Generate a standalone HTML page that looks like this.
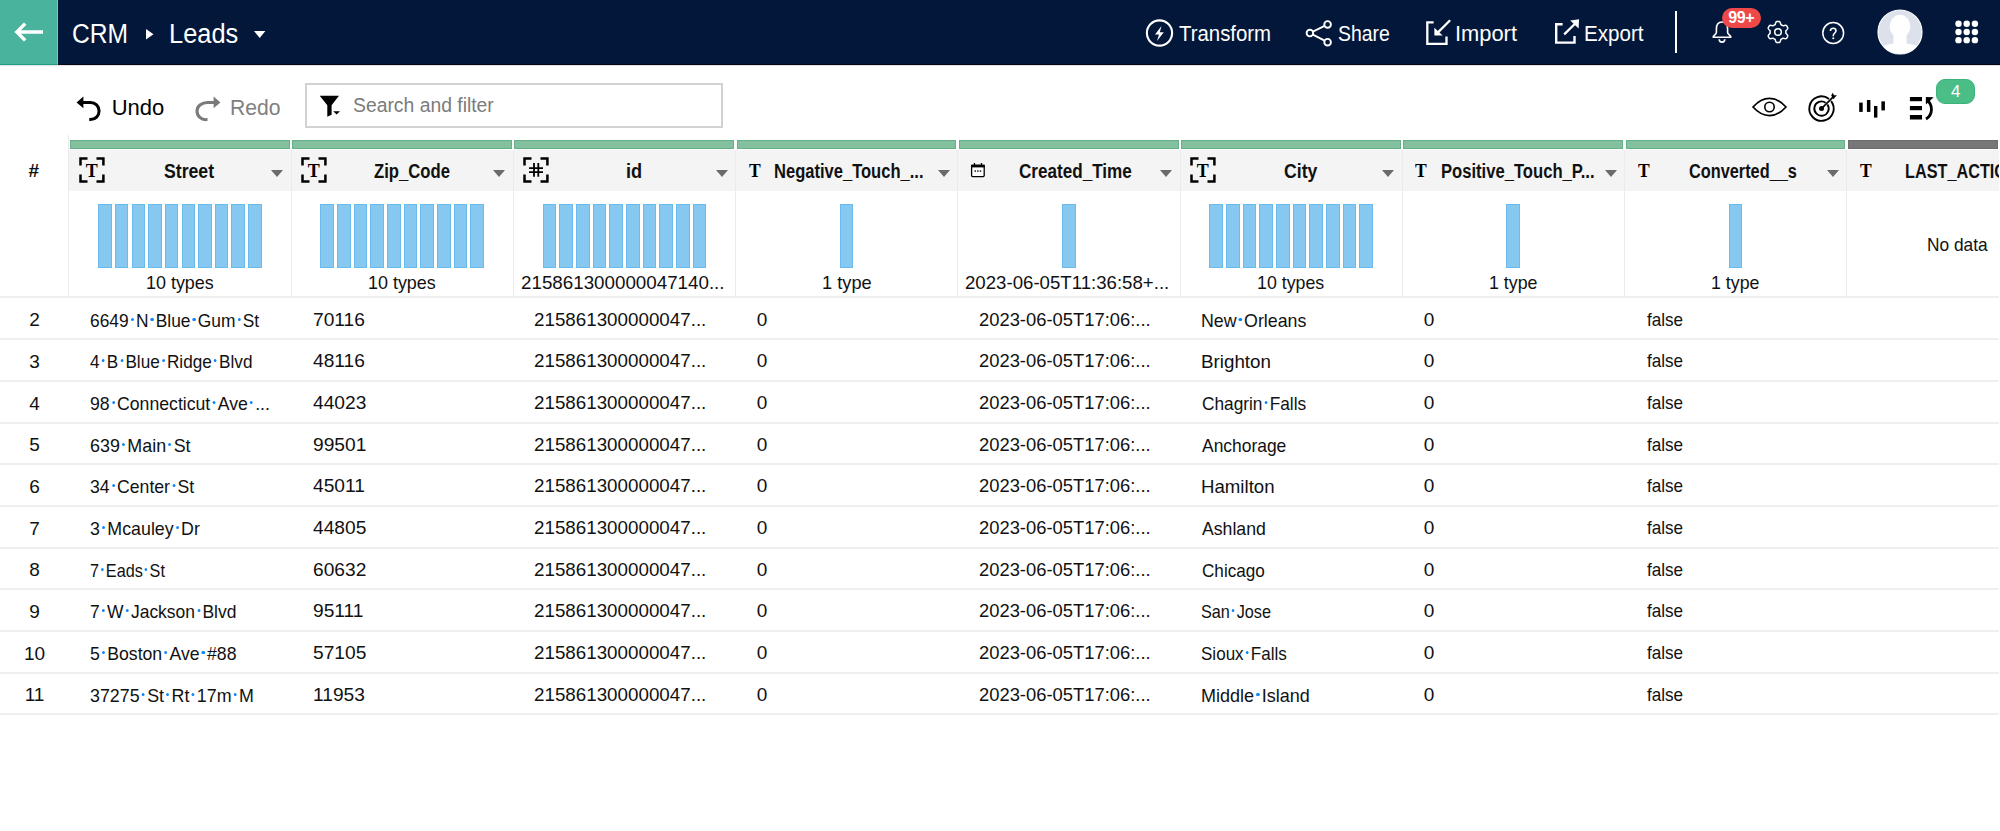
<!DOCTYPE html>
<html><head><meta charset="utf-8"><style>
*{box-sizing:border-box;margin:0;padding:0}
html,body{width:2000px;height:831px;overflow:hidden;background:#fff;font-family:"Liberation Sans",sans-serif;color:#000}
.a{position:absolute;transform-origin:0 0}
#nav{left:0;top:0;width:2000px;height:65px;background:#03173a;border-bottom:1px solid #02050d;box-shadow:0 1px 1px rgba(60,70,90,.15)}
#back{left:0;top:0;width:58px;height:65px;background:#4ab39d;border-right:1px solid #5fd6b5;border-bottom:1px solid #1f9c84}
.nt{color:#fff;font-size:27px;line-height:30px;white-space:nowrap}
.nb{color:#fff;font-size:21.5px;line-height:24px;white-space:nowrap}
.tb{font-size:22px;line-height:26px;white-space:nowrap}
.cb{top:140px;height:9.3px;background:#82c09e;border:1px solid #66b189}
.hd{top:149.5px;height:41px;background:#f4f4f4}
.vl{width:1px;background:#ebebeb}
.hl{height:2px;background:#efefef;left:0;width:2000px}
.hn{font-weight:bold;font-size:20px;line-height:22px;white-space:nowrap;color:#111}
.dd{width:0;height:0;border-left:6px solid transparent;border-right:6px solid transparent;border-top:7.5px solid #6b6b6b}
.bar{background:#86c8f0;border:1px solid #6abbec;top:203.8px;height:63.8px}
.pl{font-size:19px;line-height:22px;white-space:nowrap;top:270.5px;color:#111}
.c{font-size:19px;line-height:22px;white-space:nowrap;color:#111}
.d{display:inline-block;width:3.2px;height:3.2px;border-radius:50%;background:#0a84ff;margin:0 2.4px;vertical-align:6px}
.Ti{font-family:"Liberation Serif",serif;font-weight:bold;font-size:19.5px;line-height:20px;top:161px}
</style></head><body>

<div id="nav" class="a"></div><div id="back" class="a"></div>
<svg class="a" style="left:14px;top:21px" width="30" height="22" viewBox="0 0 30 22"><path d="M29 11H4M11.2 2.6L2.8 11L11.2 19.4" fill="none" stroke="#fff" stroke-width="3.4"/></svg>
<div id="crm" class="a nt" style="left:72.16px;top:18.70px;transform:scaleX(0.9119);">CRM</div>
<svg class="a" style="left:146px;top:28.5px" width="8" height="11"><path d="M0 0L7.5 5.3L0 10.6Z" fill="#fff"/></svg>
<div id="leads" class="a nt" style="left:169.36px;top:18.70px;transform:scaleX(0.9409);">Leads</div>
<svg class="a" style="left:254px;top:31px" width="12" height="8"><path d="M0 0H11.4L5.7 7Z" fill="#fff"/></svg>
<svg class="a" style="left:1144px;top:18px" width="31" height="31" viewBox="0 0 31 31"><circle cx="15.5" cy="15" r="12.6" fill="none" stroke="#fff" stroke-width="2.1"/><path d="M17.5 8L11 16.6H15L13 23L19.8 14.3H15.8Z" fill="#fff"/></svg>
<div id="transform" class="a nb" style="left:1179.32px;top:22.00px;transform:scaleX(0.9479);">Transform</div>
<svg class="a" style="left:1303px;top:18px" width="32" height="32" viewBox="0 0 32 32"><circle cx="24.6" cy="6.4" r="3.3" fill="none" stroke="#fff" stroke-width="1.9"/><circle cx="6.9" cy="15.1" r="3.3" fill="none" stroke="#fff" stroke-width="1.9"/><circle cx="24.6" cy="24.2" r="3.3" fill="none" stroke="#fff" stroke-width="1.9"/><path d="M9.9 13.6L21.6 7.9M9.9 16.6L21.6 22.7" stroke="#fff" stroke-width="1.9"/></svg>
<div id="share" class="a nb" style="left:1337.52px;top:22.00px;transform:scaleX(0.9036);">Share</div>
<svg class="a" style="left:1420px;top:15px" width="34" height="34" viewBox="0 0 34 34"><path d="M13.6 7.4H7.3V28.8H26.5V21.4" fill="none" stroke="#fff" stroke-width="2.3"/><path d="M30.1 5.3L16.5 18.9" fill="none" stroke="#fff" stroke-width="2.3"/><path d="M14.4 12.7V20.6H22.7Z" fill="#fff"/></svg>
<div id="import" class="a nb" style="left:1455.20px;top:22.00px;transform:scaleX(1.0169);">Import</div>
<svg class="a" style="left:1550px;top:15px" width="34" height="34" viewBox="0 0 34 34"><path d="M12.6 9.2H6.2V27.6H24.5V21" fill="none" stroke="#fff" stroke-width="2.4"/><path d="M14.2 19.4L25.5 8.2" fill="none" stroke="#fff" stroke-width="2.3"/><path d="M20.2 5.6L29.1 4.2L28.6 13.4Z" fill="#fff"/></svg>
<div id="export" class="a nb" style="left:1584.48px;top:22.00px;transform:scaleX(0.9574);">Export</div>
<div class="a" style="left:1675px;top:11px;width:2px;height:41.5px;background:#fff"></div>
<svg class="a" style="left:1708px;top:17px" width="28" height="30" viewBox="0 0 28 30"><path d="M14 5C9.8 5 8.4 8.5 8.4 12V15.5C8.4 17.5 5.2 18.5 5.2 19.8V20.2H22.8V19.8C22.8 18.5 19.6 17.5 19.6 15.5V12C19.6 8.5 18.2 5 14 5Z" fill="none" stroke="#fff" stroke-width="1.6" stroke-linejoin="round"/><path d="M11.2 22.3A2.8 2.8 0 0 0 16.8 22.3" fill="none" stroke="#fff" stroke-width="1.6"/></svg>
<div class="a" style="left:1721.5px;top:8.2px;width:39.5px;height:19.8px;border-radius:10px;background:#ef4848;color:#fff;font-weight:bold;font-size:16px;line-height:20px;text-align:center;letter-spacing:-0.3px">99+</div>
<svg class="a" style="left:1765.7px;top:20.4px" width="24" height="24" viewBox="0 0 24 24"><path d="M19.90 12.00 L19.90 12.21 L19.89 12.41 L19.88 12.62 L19.86 12.83 L19.83 13.03 L19.88 13.25 L20.13 13.51 L20.39 13.78 L20.67 14.08 L20.93 14.39 L21.19 14.72 L21.43 15.06 L21.64 15.42 L21.82 15.77 L21.79 16.06 L21.68 16.31 L21.57 16.56 L21.44 16.81 L21.32 17.06 L21.18 17.30 L21.04 17.54 L20.89 17.77 L20.74 18.00 L20.58 18.23 L20.41 18.45 L20.18 18.62 L19.78 18.64 L19.37 18.64 L18.95 18.60 L18.54 18.54 L18.13 18.46 L17.74 18.38 L17.37 18.29 L17.02 18.20 L16.81 18.27 L16.64 18.39 L16.47 18.51 L16.30 18.63 L16.13 18.74 L15.95 18.84 L15.77 18.94 L15.59 19.04 L15.40 19.13 L15.21 19.22 L15.02 19.30 L14.86 19.45 L14.76 19.80 L14.65 20.16 L14.53 20.55 L14.39 20.93 L14.24 21.32 L14.06 21.70 L13.86 22.06 L13.65 22.39 L13.38 22.51 L13.11 22.54 L12.83 22.57 L12.55 22.59 L12.28 22.60 L12.00 22.60 L11.72 22.60 L11.45 22.59 L11.17 22.57 L10.89 22.54 L10.62 22.51 L10.35 22.39 L10.14 22.06 L9.94 21.70 L9.76 21.32 L9.61 20.93 L9.47 20.55 L9.35 20.16 L9.24 19.80 L9.14 19.45 L8.98 19.30 L8.79 19.22 L8.60 19.13 L8.41 19.04 L8.23 18.94 L8.05 18.84 L7.87 18.74 L7.70 18.63 L7.53 18.51 L7.36 18.39 L7.19 18.27 L6.98 18.20 L6.63 18.29 L6.26 18.38 L5.87 18.46 L5.46 18.54 L5.05 18.60 L4.63 18.64 L4.22 18.64 L3.82 18.62 L3.59 18.45 L3.42 18.23 L3.26 18.00 L3.11 17.77 L2.96 17.54 L2.82 17.30 L2.68 17.06 L2.56 16.81 L2.43 16.56 L2.32 16.31 L2.21 16.06 L2.18 15.77 L2.36 15.42 L2.57 15.06 L2.81 14.72 L3.07 14.39 L3.33 14.08 L3.61 13.78 L3.87 13.51 L4.12 13.25 L4.17 13.03 L4.14 12.83 L4.12 12.62 L4.11 12.41 L4.10 12.21 L4.10 12.00 L4.10 11.79 L4.11 11.59 L4.12 11.38 L4.14 11.17 L4.17 10.97 L4.12 10.75 L3.87 10.49 L3.61 10.22 L3.33 9.92 L3.07 9.61 L2.81 9.28 L2.57 8.94 L2.36 8.58 L2.18 8.23 L2.21 7.94 L2.32 7.69 L2.43 7.44 L2.56 7.19 L2.68 6.94 L2.82 6.70 L2.96 6.46 L3.11 6.23 L3.26 6.00 L3.42 5.77 L3.59 5.55 L3.82 5.38 L4.22 5.36 L4.63 5.36 L5.05 5.40 L5.46 5.46 L5.87 5.54 L6.26 5.62 L6.63 5.71 L6.98 5.80 L7.19 5.73 L7.36 5.61 L7.53 5.49 L7.70 5.37 L7.87 5.26 L8.05 5.16 L8.23 5.06 L8.41 4.96 L8.60 4.87 L8.79 4.78 L8.98 4.70 L9.14 4.55 L9.24 4.20 L9.35 3.84 L9.47 3.45 L9.61 3.07 L9.76 2.68 L9.94 2.30 L10.14 1.94 L10.35 1.61 L10.62 1.49 L10.89 1.46 L11.17 1.43 L11.45 1.41 L11.72 1.40 L12.00 1.40 L12.28 1.40 L12.55 1.41 L12.83 1.43 L13.11 1.46 L13.38 1.49 L13.65 1.61 L13.86 1.94 L14.06 2.30 L14.24 2.68 L14.39 3.07 L14.53 3.45 L14.65 3.84 L14.76 4.20 L14.86 4.55 L15.02 4.70 L15.21 4.78 L15.40 4.87 L15.59 4.96 L15.77 5.06 L15.95 5.16 L16.13 5.26 L16.30 5.37 L16.47 5.49 L16.64 5.61 L16.81 5.73 L17.02 5.80 L17.37 5.71 L17.74 5.62 L18.13 5.54 L18.54 5.46 L18.95 5.40 L19.37 5.36 L19.78 5.36 L20.18 5.38 L20.41 5.55 L20.58 5.77 L20.74 6.00 L20.89 6.23 L21.04 6.46 L21.18 6.70 L21.32 6.94 L21.44 7.19 L21.57 7.44 L21.68 7.69 L21.79 7.94 L21.82 8.23 L21.64 8.58 L21.43 8.94 L21.19 9.28 L20.93 9.61 L20.67 9.92 L20.39 10.22 L20.13 10.49 L19.88 10.75 L19.83 10.97 L19.86 11.17 L19.88 11.38 L19.89 11.59 L19.90 11.79Z" fill="none" stroke="#fff" stroke-width="1.5" stroke-linejoin="round"/><circle cx="12" cy="12" r="3.3" fill="none" stroke="#fff" stroke-width="1.5"/></svg>
<svg class="a" style="left:1820px;top:20px" width="26" height="26" viewBox="0 0 26 26"><circle cx="13.2" cy="13" r="10.4" fill="none" stroke="#fff" stroke-width="1.5"/><path d="M10.4 11C10.4 9.2 11.6 8.2 13.2 8.2C14.8 8.2 16 9.2 16 10.8C16 12.8 13.3 13.2 13.3 15.6V16.2" fill="none" stroke="#fff" stroke-width="1.6"/><circle cx="13.3" cy="18.3" r="1.05" fill="#fff"/></svg>
<svg class="a" style="left:1877px;top:9px" width="46" height="46" viewBox="0 0 46 46"><defs><clipPath id="av"><circle cx="23" cy="23" r="22"/></clipPath></defs><circle cx="23" cy="23" r="22" fill="#dde1eb"/><g clip-path="url(#av)" fill="#fff"><ellipse cx="23" cy="17.3" rx="10.3" ry="11.5"/><rect x="16.5" y="24" width="13" height="12"/><path d="M-2 48C0 38 10 34 23 34C36 34 46 38 48 48Z"/></g><circle cx="23" cy="23" r="22" fill="none" stroke="#fff" stroke-width="1.2"/></svg>
<svg class="a" style="left:1955px;top:20px" width="25" height="25" fill="#fff"><circle cx="3.50" cy="3.75" r="3.2"/><circle cx="11.70" cy="3.75" r="3.2"/><circle cx="19.90" cy="3.75" r="3.2"/><circle cx="3.50" cy="11.95" r="3.2"/><circle cx="11.70" cy="11.95" r="3.2"/><circle cx="19.90" cy="11.95" r="3.2"/><circle cx="3.50" cy="20.15" r="3.2"/><circle cx="11.70" cy="20.15" r="3.2"/><circle cx="19.90" cy="20.15" r="3.2"/></svg>
<svg class="a" style="left:74px;top:94px" width="30" height="30" viewBox="0 0 30 30"><path d="M6 8.4H16.5A8.6 8.6 0 0 1 16.5 25.6H15.3" fill="none" stroke="#000" stroke-width="3"/><path d="M2.6 8.4L9.4 2.6V14.2Z" fill="#000"/></svg>
<div id="undo" class="a tb" style="left:111.68px;top:94.80px;transform:scaleX(1.0000);">Undo</div>
<svg class="a" style="left:193px;top:94px" width="30" height="30" viewBox="0 0 30 30"><path d="M22 8.4H15A10.5 8.6 0 0 0 4 17A8.6 8.6 0 0 0 13.5 25.6H14.5" fill="none" stroke="#7a7a7a" stroke-width="3"/><path d="M27.4 8.4L20.6 2.6V14.2Z" fill="#7a7a7a"/></svg>
<div id="redo" class="a tb" style="left:229.56px;top:94.80px;transform:scaleX(0.9600);color:#808080">Redo</div>
<div class="a" style="left:305px;top:83px;width:417.5px;height:45px;border:2px solid #d2d2d2"></div>
<svg class="a" style="left:319px;top:95px" width="22" height="23" viewBox="0 0 22 23"><path d="M0.7 0.7H20L12.6 10.2V19.8L8.3 21.8V10.2Z" fill="#000"/><path d="M14.2 16.2H21L17.6 19.6Z" fill="#000"/></svg>
<div id="search" class="a " style="left:352.84px;top:93.30px;transform:scaleX(0.9669);font-size:20px;line-height:24px;color:#7b7b7b;white-space:nowrap">Search and filter</div>
<svg class="a" style="left:1751px;top:96px" width="37" height="22" viewBox="0 0 37 22"><path d="M2 11C7.2 5.2 12.6 2.4 18.5 2.4C24.4 2.4 29.8 5.2 35 11C29.8 16.8 24.4 19.6 18.5 19.6C12.6 19.6 7.2 16.8 2 11Z" fill="none" stroke="#000" stroke-width="1.7" stroke-linejoin="miter"/><circle cx="18.5" cy="11" r="4.7" fill="none" stroke="#000" stroke-width="1.6"/></svg>
<svg class="a" style="left:1806px;top:92px" width="32" height="32" viewBox="0 0 32 32"><path d="M25.11 9.09A12.2 12.2 0 1 1 23.01 6.99" fill="none" stroke="#000" stroke-width="1.9"/><path d="M21.4 12.47A7.2 7.2 0 1 1 19.63 10.7" fill="none" stroke="#000" stroke-width="1.9"/><circle cx="15.5" cy="16.6" r="2.5" fill="#000"/><path d="M15.5 16.6L27.2 4.9" stroke="#000" stroke-width="1.7"/><path d="M25.2 3.6L26.7 0.8L28 3.2L30.9 3.3L28.6 5.7L27.6 7.2Z" fill="#000"/></svg>
<svg class="a" style="left:1859px;top:100px" width="27" height="18" viewBox="0 0 27 18"><rect x="0.2" y="2.6" width="3.5" height="9.3"/><rect x="7.9" y="0" width="3.5" height="11.9"/><rect x="15" y="6" width="3.4" height="11.6"/><rect x="22.4" y="1.35" width="3.5" height="9.05"/></svg>
<svg class="a" style="left:1909px;top:95px" width="27" height="26" viewBox="0 0 27 26"><rect x="0.9" y="2" width="12.1" height="4.2"/><rect x="0.9" y="11" width="12.1" height="4.2"/><rect x="0.9" y="20" width="12.1" height="4.5"/><path d="M17.5 5A10.5 11 0 0 1 17 24" fill="none" stroke="#000" stroke-width="2.8"/><path d="M16.9 2L24.7 2.3L16.9 9.5Z" fill="#000"/></svg>
<div class="a" style="left:1936.4px;top:79.2px;width:38.5px;height:24.7px;border-radius:9px;background:#4bbd87;border:1px solid #3cb379;color:#fff;font-size:17px;line-height:23px;text-align:center">4</div>
<div class="a cb" style="left:70.0px;width:219.7px;background:#82c09e;border-color:#66b189"></div>
<div class="a cb" style="left:292.2px;width:219.7px;background:#82c09e;border-color:#66b189"></div>
<div class="a cb" style="left:514.4px;width:219.7px;background:#82c09e;border-color:#66b189"></div>
<div class="a cb" style="left:736.7px;width:219.7px;background:#82c09e;border-color:#66b189"></div>
<div class="a cb" style="left:958.9px;width:219.7px;background:#82c09e;border-color:#66b189"></div>
<div class="a cb" style="left:1181.1px;width:219.7px;background:#82c09e;border-color:#66b189"></div>
<div class="a cb" style="left:1403.3px;width:219.7px;background:#82c09e;border-color:#66b189"></div>
<div class="a cb" style="left:1625.5px;width:219.7px;background:#82c09e;border-color:#66b189"></div>
<div class="a cb" style="left:1847.8px;width:150.7px;background:#777777;border-color:#6c6c6c"></div>
<div class="a hd" style="left:68.5px;width:1930.0px"></div>
<div class="a vl" style="left:68.0px;top:135px;height:162px"></div>
<div class="a vl" style="left:290.7px;top:149.5px;height:148px"></div>
<div class="a vl" style="left:512.9px;top:149.5px;height:148px"></div>
<div class="a vl" style="left:735.2px;top:149.5px;height:148px"></div>
<div class="a vl" style="left:957.4px;top:149.5px;height:148px"></div>
<div class="a vl" style="left:1179.6px;top:149.5px;height:148px"></div>
<div class="a vl" style="left:1401.8px;top:149.5px;height:148px"></div>
<div class="a vl" style="left:1624.0px;top:149.5px;height:148px"></div>
<div class="a vl" style="left:1846.3px;top:149.5px;height:148px"></div>
<div class="a hl" style="top:296.3px"></div>
<div class="a hl" style="top:338.2px"></div>
<div class="a hl" style="top:379.8px"></div>
<div class="a hl" style="top:421.5px"></div>
<div class="a hl" style="top:463.2px"></div>
<div class="a hl" style="top:504.9px"></div>
<div class="a hl" style="top:546.5px"></div>
<div class="a hl" style="top:588.2px"></div>
<div class="a hl" style="top:629.9px"></div>
<div class="a hl" style="top:671.5px"></div>
<div class="a hl" style="top:713.2px"></div>
<div class="a" style="left:28.5px;top:159.5px;font-size:19px;line-height:22px;font-weight:bold;color:#111">#</div>
<svg class="a" style="left:79.0px;top:157px" width="26" height="26" viewBox="0 0 26 26"><path d="M1.5 8.5V1.6H8.5M17.5 1.6H24.4V8.5M1.5 17.5V24.4H8.5M17.5 24.4H24.4V17.5" fill="none" stroke="#000" stroke-width="2.5"/><text x="12.8" y="19.5" text-anchor="middle" font-family="Liberation Serif" font-weight="bold" font-size="18">T</text></svg>
<div id="h0" class="a hn" style="left:163.78px;top:160.10px;transform:scaleX(0.8824);">Street</div>
<div class="a dd" style="left:271.2px;top:169.5px"></div>
<div class="a bar" style="left:98.21px;width:13.6px"></div>
<div class="a bar" style="left:114.87px;width:13.6px"></div>
<div class="a bar" style="left:131.53px;width:13.6px"></div>
<div class="a bar" style="left:148.19px;width:13.6px"></div>
<div class="a bar" style="left:164.85px;width:13.6px"></div>
<div class="a bar" style="left:181.51px;width:13.6px"></div>
<div class="a bar" style="left:198.17px;width:13.6px"></div>
<div class="a bar" style="left:214.83px;width:13.6px"></div>
<div class="a bar" style="left:231.49px;width:13.6px"></div>
<div class="a bar" style="left:248.15px;width:13.6px"></div>
<div id="p0" class="a pl" style="left:146.00px;top:272.00px;transform:scaleX(0.9429);">10 types</div>
<svg class="a" style="left:301.2px;top:157px" width="26" height="26" viewBox="0 0 26 26"><path d="M1.5 8.5V1.6H8.5M17.5 1.6H24.4V8.5M1.5 17.5V24.4H8.5M17.5 24.4H24.4V17.5" fill="none" stroke="#000" stroke-width="2.5"/><text x="12.8" y="19.5" text-anchor="middle" font-family="Liberation Serif" font-weight="bold" font-size="18">T</text></svg>
<div id="h1" class="a hn" style="left:373.54px;top:160.10px;transform:scaleX(0.8330);">Zip_Code</div>
<div class="a dd" style="left:493.4px;top:169.5px"></div>
<div class="a bar" style="left:320.43px;width:13.6px"></div>
<div class="a bar" style="left:337.09px;width:13.6px"></div>
<div class="a bar" style="left:353.75px;width:13.6px"></div>
<div class="a bar" style="left:370.41px;width:13.6px"></div>
<div class="a bar" style="left:387.07px;width:13.6px"></div>
<div class="a bar" style="left:403.73px;width:13.6px"></div>
<div class="a bar" style="left:420.39px;width:13.6px"></div>
<div class="a bar" style="left:437.05px;width:13.6px"></div>
<div class="a bar" style="left:453.71px;width:13.6px"></div>
<div class="a bar" style="left:470.37px;width:13.6px"></div>
<div id="p1" class="a pl" style="left:368.00px;top:272.00px;transform:scaleX(0.9429);">10 types</div>
<svg class="a" style="left:523.4px;top:157px" width="26" height="26" viewBox="0 0 26 26"><path d="M1.5 8.5V1.6H8.5M17.5 1.6H24.4V8.5M1.5 17.5V24.4H8.5M17.5 24.4H24.4V17.5" fill="none" stroke="#000" stroke-width="2.5"/><path d="M11 6V19.7M15.3 6V19.7M6 11.2H20M6 15.2H20" stroke="#000" stroke-width="1.8"/></svg>
<div id="h2" class="a hn" style="left:626.00px;top:160.10px;transform:scaleX(0.9065);">id</div>
<div class="a dd" style="left:715.7px;top:169.5px"></div>
<div class="a bar" style="left:542.65px;width:13.6px"></div>
<div class="a bar" style="left:559.31px;width:13.6px"></div>
<div class="a bar" style="left:575.97px;width:13.6px"></div>
<div class="a bar" style="left:592.63px;width:13.6px"></div>
<div class="a bar" style="left:609.29px;width:13.6px"></div>
<div class="a bar" style="left:625.95px;width:13.6px"></div>
<div class="a bar" style="left:642.61px;width:13.6px"></div>
<div class="a bar" style="left:659.27px;width:13.6px"></div>
<div class="a bar" style="left:675.93px;width:13.6px"></div>
<div class="a bar" style="left:692.59px;width:13.6px"></div>
<div id="p2" class="a pl" style="left:520.65px;top:272.00px;transform:scaleX(0.9878);">215861300000047140...</div>
<div class="a Ti" style="left:748.7px;transform:scaleX(0.9)">T</div>
<div id="h3" class="a hn" style="left:774.48px;top:160.10px;transform:scaleX(0.8268);">Negative_Touch_...</div>
<div class="a dd" style="left:937.9px;top:169.5px"></div>
<div class="a bar" style="left:839.77px;width:13.6px"></div>
<div id="p3" class="a pl" style="left:821.50px;top:272.00px;transform:scaleX(0.9600);">1 type</div>
<svg class="a" style="left:970.4px;top:162px" width="16" height="16" viewBox="0 0 16 16"><rect x="1.6" y="3.4" width="12.6" height="11.2" rx="1" fill="#fff" stroke="#000" stroke-width="1.3"/><rect x="1" y="2.7" width="13.8" height="2.7" fill="#000"/><rect x="3.8" y="1" width="1.3" height="2.5"/><rect x="10.8" y="1" width="1.3" height="2.5"/><circle cx="5.3" cy="9" r="0.85"/><circle cx="7.9" cy="9" r="0.85"/><circle cx="10.5" cy="9" r="0.85"/></svg>
<div id="h4" class="a hn" style="left:1019.30px;top:160.10px;transform:scaleX(0.8550);">Created_Time</div>
<div class="a dd" style="left:1160.1px;top:169.5px"></div>
<div class="a bar" style="left:1061.99px;width:13.6px"></div>
<div id="p4" class="a pl" style="left:964.50px;top:272.00px;transform:scaleX(0.9806);">2023-06-05T11:36:58+...</div>
<svg class="a" style="left:1190.1px;top:157px" width="26" height="26" viewBox="0 0 26 26"><path d="M1.5 8.5V1.6H8.5M17.5 1.6H24.4V8.5M1.5 17.5V24.4H8.5M17.5 24.4H24.4V17.5" fill="none" stroke="#000" stroke-width="2.5"/><text x="12.8" y="19.5" text-anchor="middle" font-family="Liberation Serif" font-weight="bold" font-size="18">T</text></svg>
<div id="h5" class="a hn" style="left:1283.95px;top:160.10px;transform:scaleX(0.8816);">City</div>
<div class="a dd" style="left:1382.3px;top:169.5px"></div>
<div class="a bar" style="left:1209.31px;width:13.6px"></div>
<div class="a bar" style="left:1225.97px;width:13.6px"></div>
<div class="a bar" style="left:1242.63px;width:13.6px"></div>
<div class="a bar" style="left:1259.29px;width:13.6px"></div>
<div class="a bar" style="left:1275.95px;width:13.6px"></div>
<div class="a bar" style="left:1292.61px;width:13.6px"></div>
<div class="a bar" style="left:1309.27px;width:13.6px"></div>
<div class="a bar" style="left:1325.93px;width:13.6px"></div>
<div class="a bar" style="left:1342.59px;width:13.6px"></div>
<div class="a bar" style="left:1359.25px;width:13.6px"></div>
<div id="p5" class="a pl" style="left:1257.00px;top:272.00px;transform:scaleX(0.9358);">10 types</div>
<div class="a Ti" style="left:1415.3px;transform:scaleX(0.9)">T</div>
<div id="h6" class="a hn" style="left:1441.00px;top:160.10px;transform:scaleX(0.8306);">Positive_Touch_P...</div>
<div class="a dd" style="left:1604.5px;top:169.5px"></div>
<div class="a bar" style="left:1506.43px;width:13.6px"></div>
<div id="p6" class="a pl" style="left:1489.00px;top:272.00px;transform:scaleX(0.9362);">1 type</div>
<div class="a Ti" style="left:1637.5px;transform:scaleX(0.9)">T</div>
<div id="h7" class="a hn" style="left:1688.56px;top:160.10px;transform:scaleX(0.8153);">Converted__s</div>
<div class="a dd" style="left:1826.8px;top:169.5px"></div>
<div class="a bar" style="left:1728.65px;width:13.6px"></div>
<div id="p7" class="a pl" style="left:1711.00px;top:272.00px;transform:scaleX(0.9362);">1 type</div>
<div class="a Ti" style="left:1859.8px;transform:scaleX(0.9)">T</div>
<div id="h8" class="a hn" style="left:1904.90px;top:160.10px;transform:scaleX(1.0000);transform:scaleX(0.812)">LAST_ACTION_TIME</div>
<div id="p8" class="a pl" style="left:1926.76px;top:233.50px;transform:scaleX(0.9110);">No data</div>
<div class="a c" style="left:0;width:69px;text-align:center;top:309.4px">2</div>
<div id="r0c0" class="a c" style="left:90.30px;top:309.70px;transform:scaleX(0.9135)">6649<i class="d"></i>N<i class="d"></i>Blue<i class="d"></i>Gum<i class="d"></i>St</div>
<div id="r0c1" class="a c" style="left:312.64px;top:308.70px;transform:scaleX(1.0088)">70116</div>
<div id="r0c2" class="a c" style="left:534.00px;top:308.70px;transform:scaleX(0.9884)">215861300000047...</div>
<div id="r0c3" class="a c" style="left:756.80px;top:308.70px;transform:scaleX(1.0000)">0</div>
<div id="r0c4" class="a c" style="left:979.00px;top:308.70px;transform:scaleX(0.9669)">2023-06-05T17:06:...</div>
<div id="r0c5" class="a c" style="left:1201.24px;top:309.70px;transform:scaleX(0.9369)">New<i class="d"></i>Orleans</div>
<div id="r0c6" class="a c" style="left:1423.80px;top:308.70px;transform:scaleX(1.0000)">0</div>
<div id="r0c7" class="a c" style="left:1646.58px;top:308.70px;transform:scaleX(0.9000)">false</div>
<div class="a c" style="left:0;width:69px;text-align:center;top:351.1px">3</div>
<div id="r1c0" class="a c" style="left:90.30px;top:351.37px;transform:scaleX(0.9034)">4<i class="d"></i>B<i class="d"></i>Blue<i class="d"></i>Ridge<i class="d"></i>Blvd</div>
<div id="r1c1" class="a c" style="left:312.64px;top:350.37px;transform:scaleX(1.0088)">48116</div>
<div id="r1c2" class="a c" style="left:534.00px;top:350.37px;transform:scaleX(0.9884)">215861300000047...</div>
<div id="r1c3" class="a c" style="left:756.80px;top:350.37px;transform:scaleX(1.0000)">0</div>
<div id="r1c4" class="a c" style="left:979.00px;top:350.37px;transform:scaleX(0.9669)">2023-06-05T17:06:...</div>
<div id="r1c5" class="a c" style="left:1201.24px;top:351.37px;transform:scaleX(0.9883)">Brighton</div>
<div id="r1c6" class="a c" style="left:1423.80px;top:350.37px;transform:scaleX(1.0000)">0</div>
<div id="r1c7" class="a c" style="left:1646.58px;top:350.37px;transform:scaleX(0.9000)">false</div>
<div class="a c" style="left:0;width:69px;text-align:center;top:392.7px">4</div>
<div id="r2c0" class="a c" style="left:90.30px;top:393.04px;transform:scaleX(0.9292)">98<i class="d"></i>Connecticut<i class="d"></i>Ave<i class="d"></i>...</div>
<div id="r2c1" class="a c" style="left:312.64px;top:392.04px;transform:scaleX(1.0088)">44023</div>
<div id="r2c2" class="a c" style="left:534.00px;top:392.04px;transform:scaleX(0.9884)">215861300000047...</div>
<div id="r2c3" class="a c" style="left:756.80px;top:392.04px;transform:scaleX(1.0000)">0</div>
<div id="r2c4" class="a c" style="left:979.00px;top:392.04px;transform:scaleX(0.9669)">2023-06-05T17:06:...</div>
<div id="r2c5" class="a c" style="left:1202.04px;top:393.04px;transform:scaleX(0.9088)">Chagrin<i class="d"></i>Falls</div>
<div id="r2c6" class="a c" style="left:1423.80px;top:392.04px;transform:scaleX(1.0000)">0</div>
<div id="r2c7" class="a c" style="left:1646.58px;top:392.04px;transform:scaleX(0.9000)">false</div>
<div class="a c" style="left:0;width:69px;text-align:center;top:434.4px">5</div>
<div id="r3c0" class="a c" style="left:89.50px;top:434.71px;transform:scaleX(0.9415)">639<i class="d"></i>Main<i class="d"></i>St</div>
<div id="r3c1" class="a c" style="left:312.64px;top:433.71px;transform:scaleX(1.0088)">99501</div>
<div id="r3c2" class="a c" style="left:534.00px;top:433.71px;transform:scaleX(0.9884)">215861300000047...</div>
<div id="r3c3" class="a c" style="left:756.80px;top:433.71px;transform:scaleX(1.0000)">0</div>
<div id="r3c4" class="a c" style="left:979.00px;top:433.71px;transform:scaleX(0.9669)">2023-06-05T17:06:...</div>
<div id="r3c5" class="a c" style="left:1202.04px;top:434.71px;transform:scaleX(0.9174)">Anchorage</div>
<div id="r3c6" class="a c" style="left:1423.80px;top:433.71px;transform:scaleX(1.0000)">0</div>
<div id="r3c7" class="a c" style="left:1646.58px;top:433.71px;transform:scaleX(0.9000)">false</div>
<div class="a c" style="left:0;width:69px;text-align:center;top:476.1px">6</div>
<div id="r4c0" class="a c" style="left:90.30px;top:476.38px;transform:scaleX(0.9286)">34<i class="d"></i>Center<i class="d"></i>St</div>
<div id="r4c1" class="a c" style="left:312.64px;top:475.38px;transform:scaleX(1.0088)">45011</div>
<div id="r4c2" class="a c" style="left:534.00px;top:475.38px;transform:scaleX(0.9884)">215861300000047...</div>
<div id="r4c3" class="a c" style="left:756.80px;top:475.38px;transform:scaleX(1.0000)">0</div>
<div id="r4c4" class="a c" style="left:979.00px;top:475.38px;transform:scaleX(0.9669)">2023-06-05T17:06:...</div>
<div id="r4c5" class="a c" style="left:1201.24px;top:476.38px;transform:scaleX(0.9811)">Hamilton</div>
<div id="r4c6" class="a c" style="left:1423.80px;top:475.38px;transform:scaleX(1.0000)">0</div>
<div id="r4c7" class="a c" style="left:1646.58px;top:475.38px;transform:scaleX(0.9000)">false</div>
<div class="a c" style="left:0;width:69px;text-align:center;top:517.8px">7</div>
<div id="r5c0" class="a c" style="left:90.30px;top:518.05px;transform:scaleX(0.9368)">3<i class="d"></i>Mcauley<i class="d"></i>Dr</div>
<div id="r5c1" class="a c" style="left:312.64px;top:517.05px;transform:scaleX(1.0088)">44805</div>
<div id="r5c2" class="a c" style="left:534.00px;top:517.05px;transform:scaleX(0.9884)">215861300000047...</div>
<div id="r5c3" class="a c" style="left:756.80px;top:517.05px;transform:scaleX(1.0000)">0</div>
<div id="r5c4" class="a c" style="left:979.00px;top:517.05px;transform:scaleX(0.9669)">2023-06-05T17:06:...</div>
<div id="r5c5" class="a c" style="left:1202.04px;top:518.05px;transform:scaleX(0.9295)">Ashland</div>
<div id="r5c6" class="a c" style="left:1423.80px;top:517.05px;transform:scaleX(1.0000)">0</div>
<div id="r5c7" class="a c" style="left:1646.58px;top:517.05px;transform:scaleX(0.9000)">false</div>
<div class="a c" style="left:0;width:69px;text-align:center;top:559.4px">8</div>
<div id="r6c0" class="a c" style="left:90.30px;top:559.72px;transform:scaleX(0.8532)">7<i class="d"></i>Eads<i class="d"></i>St</div>
<div id="r6c1" class="a c" style="left:312.64px;top:558.72px;transform:scaleX(1.0088)">60632</div>
<div id="r6c2" class="a c" style="left:534.00px;top:558.72px;transform:scaleX(0.9884)">215861300000047...</div>
<div id="r6c3" class="a c" style="left:756.80px;top:558.72px;transform:scaleX(1.0000)">0</div>
<div id="r6c4" class="a c" style="left:979.00px;top:558.72px;transform:scaleX(0.9669)">2023-06-05T17:06:...</div>
<div id="r6c5" class="a c" style="left:1202.04px;top:559.72px;transform:scaleX(0.9015)">Chicago</div>
<div id="r6c6" class="a c" style="left:1423.80px;top:558.72px;transform:scaleX(1.0000)">0</div>
<div id="r6c7" class="a c" style="left:1646.58px;top:558.72px;transform:scaleX(0.9000)">false</div>
<div class="a c" style="left:0;width:69px;text-align:center;top:601.1px">9</div>
<div id="r7c0" class="a c" style="left:90.30px;top:601.39px;transform:scaleX(0.9203)">7<i class="d"></i>W<i class="d"></i>Jackson<i class="d"></i>Blvd</div>
<div id="r7c1" class="a c" style="left:312.64px;top:600.39px;transform:scaleX(1.0088)">95111</div>
<div id="r7c2" class="a c" style="left:534.00px;top:600.39px;transform:scaleX(0.9884)">215861300000047...</div>
<div id="r7c3" class="a c" style="left:756.80px;top:600.39px;transform:scaleX(1.0000)">0</div>
<div id="r7c4" class="a c" style="left:979.00px;top:600.39px;transform:scaleX(0.9669)">2023-06-05T17:06:...</div>
<div id="r7c5" class="a c" style="left:1201.24px;top:601.39px;transform:scaleX(0.8544)">San<i class="d"></i>Jose</div>
<div id="r7c6" class="a c" style="left:1423.80px;top:600.39px;transform:scaleX(1.0000)">0</div>
<div id="r7c7" class="a c" style="left:1646.58px;top:600.39px;transform:scaleX(0.9000)">false</div>
<div class="a c" style="left:0;width:69px;text-align:center;top:642.8px">10</div>
<div id="r8c0" class="a c" style="left:90.30px;top:643.06px;transform:scaleX(0.9287)">5<i class="d"></i>Boston<i class="d"></i>Ave<i class="d"></i>#88</div>
<div id="r8c1" class="a c" style="left:312.64px;top:642.06px;transform:scaleX(1.0088)">57105</div>
<div id="r8c2" class="a c" style="left:534.00px;top:642.06px;transform:scaleX(0.9884)">215861300000047...</div>
<div id="r8c3" class="a c" style="left:756.80px;top:642.06px;transform:scaleX(1.0000)">0</div>
<div id="r8c4" class="a c" style="left:979.00px;top:642.06px;transform:scaleX(0.9669)">2023-06-05T17:06:...</div>
<div id="r8c5" class="a c" style="left:1201.24px;top:643.06px;transform:scaleX(0.8969)">Sioux<i class="d"></i>Falls</div>
<div id="r8c6" class="a c" style="left:1423.80px;top:642.06px;transform:scaleX(1.0000)">0</div>
<div id="r8c7" class="a c" style="left:1646.58px;top:642.06px;transform:scaleX(0.9000)">false</div>
<div class="a c" style="left:0;width:69px;text-align:center;top:684.4px">11</div>
<div id="r9c0" class="a c" style="left:90.30px;top:684.73px;transform:scaleX(0.9399)">37275<i class="d"></i>St<i class="d"></i>Rt<i class="d"></i>17m<i class="d"></i>M</div>
<div id="r9c1" class="a c" style="left:312.64px;top:683.73px;transform:scaleX(1.0088)">11953</div>
<div id="r9c2" class="a c" style="left:534.00px;top:683.73px;transform:scaleX(0.9884)">215861300000047...</div>
<div id="r9c3" class="a c" style="left:756.80px;top:683.73px;transform:scaleX(1.0000)">0</div>
<div id="r9c4" class="a c" style="left:979.00px;top:683.73px;transform:scaleX(0.9669)">2023-06-05T17:06:...</div>
<div id="r9c5" class="a c" style="left:1201.24px;top:684.73px;transform:scaleX(0.9483)">Middle<i class="d"></i>Island</div>
<div id="r9c6" class="a c" style="left:1423.80px;top:683.73px;transform:scaleX(1.0000)">0</div>
<div id="r9c7" class="a c" style="left:1646.58px;top:683.73px;transform:scaleX(0.9000)">false</div>
<div class="a" style="left:1999px;top:130px;width:1px;height:701px;background:#fff"></div>
</body></html>
